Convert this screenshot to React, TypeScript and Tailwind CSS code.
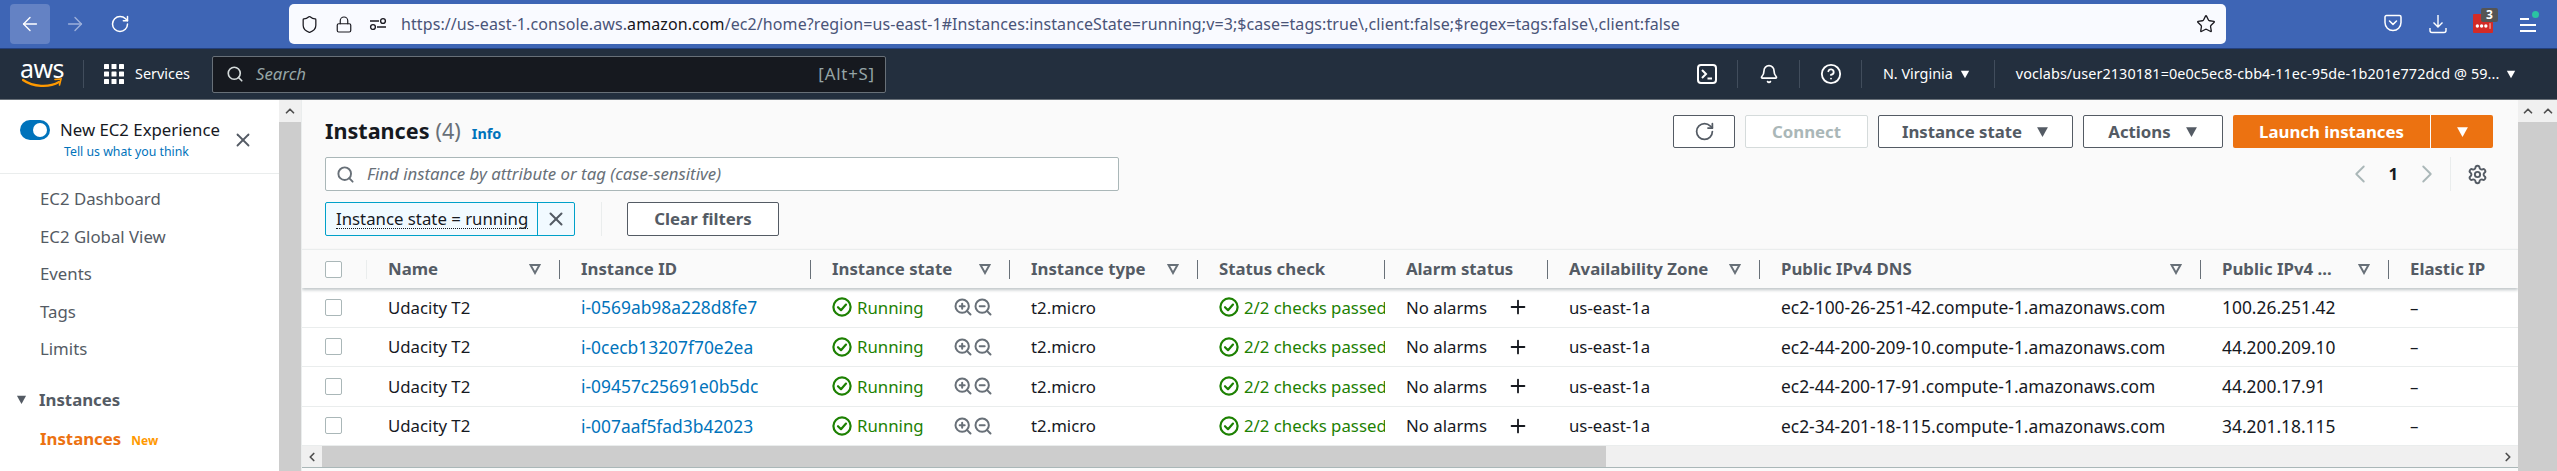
import { ChevronLeft, ChevronRight, ChevronUp, Lock, Plus, RotateCw, Search, Settings, Shield, Star, X, ZoomIn, ZoomOut, ArrowLeft, ArrowRight, Bell, CircleHelp } from 'lucide-react';

const tableCols = 'grid grid-cols-[65px_193px_251px_199px_188px_187px_163px_212px_441px_188px_129px]';

const instances = [
  { id: 'i-0569ab98a228d8fe7', dns: 'ec2-100-26-251-42.compute-1.amazonaws.com', ip: '100.26.251.42' },
  { id: 'i-0cecb13207f70e2ea', dns: 'ec2-44-200-209-10.compute-1.amazonaws.com', ip: '44.200.209.10' },
  { id: 'i-09457c25691e0b5dc', dns: 'ec2-44-200-17-91.compute-1.amazonaws.com', ip: '44.200.17.91' },
  { id: 'i-007aaf5fad3b42023', dns: 'ec2-34-201-18-115.compute-1.amazonaws.com', ip: '34.201.18.115' },
];

const headers = [
  { label: 'Name', filter: true },
  { label: 'Instance ID', filter: false },
  { label: 'Instance state', filter: true },
  { label: 'Instance type', filter: true },
  { label: 'Status check', filter: false },
  { label: 'Alarm status', filter: false },
  { label: 'Availability Zone', filter: true },
  { label: 'Public IPv4 DNS', filter: true },
  { label: 'Public IPv4 ...', filter: true },
  { label: 'Elastic IP', filter: false },
];

function Caret({ className }: { className: string }) {
  return (
    <svg viewBox="0 0 12 12" className={className} fill="currentColor">
      <path d="M1 2h10L6 11z" />
    </svg>
  );
}

function StatusIcon() {
  return (
    <svg viewBox="0 0 20 20" className="w-[20px] h-[20px] shrink-0" fill="none" stroke="#1d8102" strokeWidth="2.2">
      <circle cx="10" cy="10" r="8.6" />
      <path d="M6 10.2l3 3 5-5.6" strokeLinecap="round" strokeLinejoin="round" />
    </svg>
  );
}

function NavSep() {
  return <div className="w-px h-[28px] bg-[#414d5c] shrink-0" />;
}

function Checkbox() {
  return <div className="w-[17px] h-[17px] ml-[23px] rounded-[2px] border border-[#aab7b8] bg-white shrink-0" />;
}

function BrowserBar() {
  return (
    <div className="h-[49px] bg-[#3e65b5] border-b border-[#23407f] flex items-start pt-[4px] pl-[10px] text-white">
      <div className="w-[40px] h-[40px] rounded-[4px] bg-[#6482c4] flex items-center justify-center">
        <ArrowLeft className="w-[22px] h-[22px]" strokeWidth={1.5} />
      </div>
      <div className="w-[40px] h-[40px] ml-[5px] flex items-center justify-center text-[#9db0db]">
        <ArrowRight className="w-[22px] h-[22px]" strokeWidth={1.5} />
      </div>
      <div className="w-[40px] h-[40px] ml-[5px] flex items-center justify-center">
        <RotateCw className="w-[20px] h-[20px]" strokeWidth={1.8} />
      </div>
      <div className="w-[1937px] h-[40px] ml-[149px] rounded-[5px] bg-[#f9faff] flex items-center text-[#1c1b22]">
        <Shield className="w-[19px] h-[19px] ml-[11px]" strokeWidth={1.6} />
        <Lock className="w-[18px] h-[19px] ml-[16px]" strokeWidth={1.6} />
        <svg viewBox="0 0 18 14" className="w-[18px] h-[14px] ml-[16px]" fill="none" stroke="currentColor" strokeWidth="1.4">
          <path d="M1 4h9M8 10h9" />
          <circle cx="14" cy="4" r="2.4" />
          <circle cx="4" cy="10" r="2.4" />
        </svg>
        <span className="ml-[14px] text-[16px] tracking-[0.09px] text-[#4a5478] whitespace-nowrap">
          https://us-east-1.console.aws.<span className="text-[#15141a]">amazon.com</span>/ec2/home?region=us-east-1#Instances:instanceState=running;v=3;$case=tags:true\,client:false;$regex=tags:false\,client:false
        </span>
        <Star className="w-[20px] h-[20px] ml-auto mr-[10px]" strokeWidth={1.6} />
      </div>
      <div className="flex items-start ml-[158px] mt-[10px]">
        <svg viewBox="0 0 18 18" className="w-[18px] h-[18px]" fill="none" stroke="currentColor" strokeWidth="1.5">
          <path d="M2.5 1.5h13a1.5 1.5 0 0 1 1.5 1.5v5.5a8 8 0 0 1-16 0V3a1.5 1.5 0 0 1 1.5-1.5z" />
          <path d="M5.5 7l3.5 3.4L12.5 7" strokeLinecap="round" strokeLinejoin="round" />
        </svg>
        <svg viewBox="0 0 18 20" className="w-[18px] h-[20px] ml-[27px]" fill="none" stroke="currentColor" strokeWidth="1.4">
          <path d="M9 1v12M4.5 8.5L9 13l4.5-4.5M1 14v2.5a2 2 0 0 0 2 2h12a2 2 0 0 0 2-2V14" />
        </svg>
        <div className="relative w-[20px] h-[19px] ml-[26px] bg-[#d32b27] rounded-[1px] flex items-center pl-[2px]">
          <svg viewBox="0 0 18 6" className="w-[17px] h-[6px] mt-[5px]" fill="white">
            <circle cx="2.5" cy="3" r="1.8" />
            <circle cx="7" cy="3" r="1.8" />
            <circle cx="11.5" cy="3" r="1.8" />
            <rect x="15.5" y="0" width="0.8" height="6" />
          </svg>
          <span className="absolute left-[8px] top-[-6px] w-[17px] h-[14px] rounded-[2px] bg-[#555] text-[12px] leading-[14px] font-bold text-center">3</span>
        </div>
        <div className="relative w-[16px] h-[14px] ml-[27px] mt-[4px] flex flex-col justify-between">
          <div className="h-[2px] w-[9px] bg-white" />
          <div className="h-[2px] bg-white" />
          <div className="h-[2px] bg-white" />
          <span className="absolute right-[-3px] top-[-7px] w-[7px] h-[7px] rounded-full bg-[#2ac3a2]" />
        </div>
      </div>
    </div>
  );
}

function ConsoleNav() {
  return (
    <div className="h-[51px] bg-[#232f3e] border-b border-[#687078] flex items-center text-white text-[14.4px]">
      <div className="ml-[22px] w-[40px] flex flex-col items-center">
        <span className="text-[25px] leading-[20px] tracking-[-0.5px] mt-[-3px]">aws</span>
        <svg viewBox="0 0 40 10" className="w-[40px] h-[10px]" fill="none">
          <path d="M1 2c10 7 26 8 36 2" stroke="#f90" strokeWidth="2.2" strokeLinecap="round" />
          <path d="M33 1.5l6-.5-1.5 6" stroke="#f90" strokeWidth="1.6" strokeLinecap="round" />
        </svg>
      </div>
      <div className="ml-[21px]"><NavSep /></div>
      <svg viewBox="0 0 20 20" className="w-[20px] h-[20px] ml-[20px]" fill="white">
        {[0, 7.5, 15].flatMap(y => [0, 7.5, 15].map(x => <rect key={`${x}-${y}`} x={x} y={y} width="5" height="5" rx="0.6" />))}
      </svg>
      <span className="ml-[11px]">Services</span>
      <div className="ml-[22px] w-[674px] h-[37px] rounded-[2px] border border-[#687078] bg-[#16191f] flex items-center">
        <Search className="w-[18px] h-[18px] ml-[13px] text-[#d5dbdb]" strokeWidth={2.2} />
        <span className="ml-[12px] italic text-[16.8px] text-[#95a5a6]">Search</span>
        <span className="ml-auto mr-[10px] text-[16.8px] tracking-[0.8px] text-[#95a5a6]">[Alt+S]</span>
      </div>
      <svg viewBox="0 0 20 20" className="w-[20px] h-[20px] ml-[811px]" fill="none" stroke="white" strokeWidth="2">
        <rect x="1" y="1" width="18" height="18" rx="3" />
        <path d="M5 6l4 4-4 4M10.5 14.5h4.5" />
      </svg>
      <div className="ml-[20px]"><NavSep /></div>
      <Bell className="w-[20px] h-[20px] ml-[21px]" strokeWidth={2} />
      <div className="ml-[20px]"><NavSep /></div>
      <CircleHelp className="w-[22px] h-[22px] ml-[20px]" strokeWidth={2} />
      <div className="ml-[19px]"><NavSep /></div>
      <span className="ml-[21px] whitespace-nowrap">N. Virginia</span>
      <Caret className="w-[10px] h-[10px] ml-[7px] text-white" />
      <div className="ml-[24px]"><NavSep /></div>
      <span className="ml-[21px] whitespace-nowrap tracking-[0.08px]">voclabs/user2130181=0e0c5ec8-cbb4-11ec-95de-1b201e772dcd @ 59...</span>
      <Caret className="w-[10px] h-[10px] ml-[7px] text-white" />
    </div>
  );
}

function Sidebar() {
  const items = ['EC2 Dashboard', 'EC2 Global View', 'Events', 'Tags', 'Limits'];
  return (
    <div className="w-[279px] h-full bg-white shrink-0 text-[#545b64] text-[16.8px]">
      <div className="h-[74px] border-b border-[#eaeded] relative pl-[20px] pt-[20px]">
        <div className="flex items-center h-[20px]">
          <div className="w-[30px] h-[20px] rounded-full bg-[#0073bb] flex items-center justify-end pr-[3px]">
            <div className="w-[14px] h-[14px] rounded-full bg-white" />
          </div>
          <span className="ml-[10px] text-[#16191f] whitespace-nowrap">New EC2 Experience</span>
        </div>
        <div className="ml-[44px] mt-[2px] text-[12.3px] leading-[20px] text-[#0073bb] whitespace-nowrap">Tell us what you think</div>
        <X className="absolute left-[232px] top-[29px] w-[22px] h-[22px] text-[#545b64]" strokeWidth={2} />
      </div>
      <div className="pt-[6px] pl-[40px]">
        {items.map(item => (
          <div key={item} className="h-[37.5px] flex items-center">{item}</div>
        ))}
      </div>
      <div className="mt-[17px] pl-[16px] flex items-center h-[30px] font-bold">
        <Caret className="w-[11px] h-[11px] text-[#545b64]" />
        <span className="ml-[12px]">Instances</span>
      </div>
      <div className="mt-[11px] pl-[40px] flex items-baseline font-bold text-[#ec7211]">
        Instances
        <span className="ml-[10px] text-[12px] text-[#ff9900]">New</span>
      </div>
    </div>
  );
}

function ScrollTrack({ width }: { width: string }) {
  return (
    <div className={`${width} h-full shrink-0 flex flex-col bg-[#cdcdcd]`}>
      <div className="h-[22px] bg-[#f0f0f0] flex items-center justify-center text-[#505050]">
        <ChevronUp className="w-[14px] h-[14px]" strokeWidth={3} />
      </div>
    </div>
  );
}

function ToolButton({ label, width, caret, disabled }: { label: string; width: string; caret?: boolean; disabled?: boolean }) {
  return (
    <div className={`${width} h-[33px] rounded-[2px] border bg-white flex items-center justify-center font-bold ${disabled ? 'border-[#d5dbdb] text-[#aab7b8]' : 'border-[#545b64] text-[#545b64]'}`}>
      {label}
      {caret && <Caret className="w-[13px] h-[13px] ml-[14px] text-[#545b64]" />}
    </div>
  );
}

function InstancesTable() {
  return (
    <div>
      <div className={`${tableCols} h-[39px] border-t border-[#eaeded] bg-[#fafafa] font-bold text-[#545b64] shadow-[0_2px_3px_rgba(0,28,36,0.25)] relative z-10`}>
        <div className="flex items-center">
          <Checkbox />
          <div className="w-px h-[19px] bg-[#eaeded] ml-auto" />
        </div>
        {headers.map(h => (
          <div key={h.label} className="flex items-center">
            <span className="flex-1 pl-[21px] whitespace-nowrap overflow-hidden">{h.label}</span>
            {h.filter && <svg viewBox="0 0 12 12" className="w-[12px] h-[12px] mr-[18px]" fill="none" stroke="#687078" strokeWidth="2"><path d="M1.5 2h9L6 10z" /></svg>}
            {h.label !== 'Elastic IP' && <div className="w-px h-[19px] bg-[#687078]" />}
          </div>
        ))}
      </div>
      {instances.map(row => (
        <div key={row.id} className={`${tableCols} h-[39.5px] border-b border-[#eaeded] bg-white text-[#16191f] items-center whitespace-nowrap`}>
          <div><Checkbox /></div>
          <div className="pl-[21px]">Udacity T2</div>
          <div className="pl-[21px] text-[17.4px] text-[#0073bb]">{row.id}</div>
          <div className="pl-[21px] flex items-center text-[#1d8102]">
            <StatusIcon />
            <span className="ml-[5px]">Running</span>
            <ZoomIn className="w-[20px] h-[20px] ml-[29px] text-[#687078]" strokeWidth={2.4} />
            <ZoomOut className="w-[20px] h-[20px] text-[#687078]" strokeWidth={2.4} />
          </div>
          <div className="pl-[21px]">t2.micro</div>
          <div className="pl-[21px] flex items-center text-[#1d8102] overflow-hidden">
            <StatusIcon />
            <span className="ml-[5px]">2/2 checks passed</span>
          </div>
          <div className="pl-[21px] flex items-center">
            No alarms
            <Plus className="w-[22px] h-[22px] ml-[20px]" strokeWidth={2} />
          </div>
          <div className="pl-[21px]">us-east-1a</div>
          <div className="pl-[21px] text-[17.4px]">{row.dns}</div>
          <div className="pl-[21px] text-[17.4px]">{row.ip}</div>
          <div className="pl-[21px]">–</div>
        </div>
      ))}
      <div className="h-[21px] bg-[#f0f0f0] flex items-center">
        <div className="w-[20px] h-full flex items-center justify-center text-[#505050]">
          <ChevronLeft className="w-[14px] h-[14px]" strokeWidth={3} />
        </div>
        <div className="w-[1284px] h-full bg-[#cdcdcd]" />
        <ChevronRight className="w-[14px] h-[14px] ml-auto mr-[3px] text-[#505050]" strokeWidth={3} />
      </div>
      <div className="h-[1px] bg-[#aab7b8]" />
    </div>
  );
}

function MainPanel() {
  return (
    <div className="w-[2217px] h-full shrink-0 bg-[#fafafa] border-l border-[#eaeded] text-[16.8px] overflow-hidden">
      <div className="pl-[23px] pr-[25px] pt-[15px] h-[149px]">
        <div className="flex items-center justify-between h-[33px]">
          <div className="flex items-baseline">
            <span className="text-[21.6px] font-bold text-[#16191f]">Instances</span>
            <span className="ml-[6px] text-[21.6px] text-[#687078]">(4)</span>
            <span className="ml-[11px] text-[14.4px] font-bold text-[#0073bb]">Info</span>
          </div>
          <div className="flex gap-[10px]">
            <div className="w-[62px] h-[33px] rounded-[2px] border border-[#545b64] bg-white flex items-center justify-center text-[#545b64]">
              <RotateCw className="w-[21px] h-[21px]" strokeWidth={2} />
            </div>
            <ToolButton label="Connect" width="w-[123px]" disabled />
            <ToolButton label="Instance state" width="w-[195px]" caret />
            <ToolButton label="Actions" width="w-[140px]" caret />
            <div className="flex h-[33px] font-bold text-white">
              <div className="w-[197px] rounded-l-[2px] bg-[#ec7211] flex items-center justify-center">Launch instances</div>
              <div className="w-[62px] ml-px rounded-r-[2px] bg-[#ec7211] flex items-center justify-center">
                <Caret className="w-[13px] h-[13px] text-white" />
              </div>
            </div>
          </div>
        </div>
        <div className="flex items-center justify-between mt-[9px]">
          <div className="w-[794px] h-[34px] rounded-[2px] border border-[#aab7b8] bg-white flex items-center">
            <Search className="w-[19px] h-[19px] ml-[10px] text-[#687078]" strokeWidth={2.4} />
            <span className="ml-[12px] italic text-[#687078]">Find instance by attribute or tag (case-sensitive)</span>
          </div>
          <div className="flex items-center h-[34px]">
            <ChevronLeft className="w-[30px] h-[30px] text-[#aab7b8]" strokeWidth={1.5} />
            <span className="ml-[13px] font-bold text-[#16191f]">1</span>
            <ChevronRight className="w-[30px] h-[30px] ml-[14px] text-[#aab7b8]" strokeWidth={1.5} />
            <div className="w-px h-[34px] bg-[#eaeded] ml-[8px]" />
            <Settings className="w-[21px] h-[21px] ml-[16px] mr-[5px] text-[#545b64]" strokeWidth={2.2} />
          </div>
        </div>
        <div className="flex items-center mt-[11px]">
          <div className="h-[34px] w-[250px] rounded-[2px] border border-[#00a1c9] bg-[#f1faff] flex items-center">
            <span className="ml-[10px] leading-[19px] text-[#16191f] whitespace-nowrap border-b border-dotted border-[#16191f]">Instance state = running</span>
            <div className="ml-auto w-[37px] h-full border-l border-[#00a1c9] flex items-center justify-center text-[#545b64]">
              <X className="w-[22px] h-[22px]" strokeWidth={2.2} />
            </div>
          </div>
          <div className="w-px h-[34px] bg-[#eaeded] ml-[26px]" />
          <div className="ml-[25px] w-[152px] h-[34px] rounded-[2px] border border-[#545b64] bg-white flex items-center justify-center font-bold text-[#545b64]">Clear filters</div>
        </div>
      </div>
      <InstancesTable />
    </div>
  );
}

export default function App() {
  return (
    <div className="w-[2557px] h-[471px] overflow-hidden bg-white font-['Noto_Sans',sans-serif]">
      <BrowserBar />
      <ConsoleNav />
      <div className="flex h-[371px]">
        <Sidebar />
        <ScrollTrack width="w-[22px]" />
        <MainPanel />
        <ScrollTrack width="w-[20px]" />
        <ScrollTrack width="w-[19px]" />
      </div>
    </div>
  );
}
